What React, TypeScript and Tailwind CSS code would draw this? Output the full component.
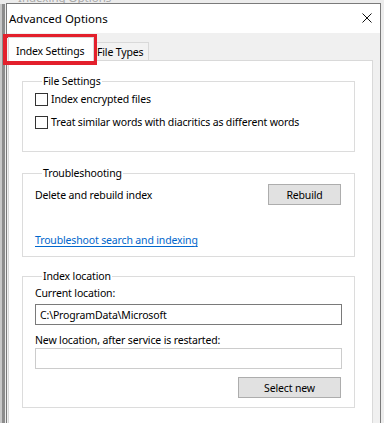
import React from "react";

const font = "font-['Segoe_UI','Noto_Sans',sans-serif]";

function CheckRow({ label }: { label: string }) {
  return (
    <div className="flex items-center h-[16px]">
      <span className="w-[13px] h-[13px] border border-[#333333] bg-white shrink-0" />
      <span className="ml-[3px] leading-[16px] whitespace-nowrap">{label}</span>
    </div>
  );
}

function Btn({ label, w }: { label: string; w: string }) {
  return (
    <div
      className={`${w} h-[21px] border border-[#adadad] bg-[#e1e1e1] flex items-center justify-center leading-[16px]`}
    >
      {label}
    </div>
  );
}

export default function App() {
  return (
    <div
      className={`relative w-[384px] h-[423px] overflow-hidden bg-[#ececec] text-[10.5px] tracking-[-0.15px] text-black ${font}`}
    >
      {/* parent window remnants behind */}
      <div className="absolute left-[18px] top-[-10px] text-[11.5px] tracking-normal text-[#a8a8a8] leading-[16px] whitespace-nowrap">
        Indexing Options
      </div>
      <div className="absolute left-0 top-[4px] w-[2px] h-[420px] bg-[#c8c8c8]" />
      <div className="absolute left-[2px] top-[4px] w-[3px] h-[420px] bg-[#8c8c8c]" />

      {/* dialog window */}
      <div className="absolute left-[6px] top-[3px] w-[375px] h-[440px] border border-[#7a7a7a] bg-[#f0f0f0] flex flex-col">
        <div className="h-[29px] bg-white flex items-center justify-between pl-[2px] pr-[8px] shrink-0">
          <span className="leading-[16px] text-[11.5px] tracking-normal">Advanced Options</span>
          <svg width="10" height="10" viewBox="0 0 10 10" className="mb-[1px]">
            <path d="M0.5 0.5 L9.5 9.5 M9.5 0.5 L0.5 9.5" stroke="#111" strokeWidth="1" />
          </svg>
        </div>

        {/* tabs */}
        <div className="flex items-end h-[28px] pl-[1px] shrink-0">
          <div className="w-[86px] h-[24px] bg-white border border-[#d9d9d9] border-b-0 flex items-center pl-[7px] pt-[3px] leading-[16px] whitespace-nowrap relative z-10">
            Index Settings
          </div>
          <div className="w-[55px] h-[19px] bg-[#f2f2f2] border border-[#d9d9d9] border-b-0 border-l-0 flex items-center pl-[3px] leading-[16px] whitespace-nowrap">
            File Types
          </div>
        </div>

        {/* panel */}
        <div className="ml-[1px] w-[365px] flex-1 -mt-[1px] bg-white border border-[#d9d9d9] pl-[13px] pt-[12px]">
          <fieldset className="w-[333px] border border-[#dcdcdc] pl-[12px] pb-[21px] pt-0 m-0">
            <legend className="ml-[7px] px-[1px] leading-[16px]">File Settings</legend>
            <div className="mt-[2px] flex flex-col gap-[7px]">
              <CheckRow label="Index encrypted files" />
              <CheckRow label="Treat similar words with diacritics as different words" />
            </div>
          </fieldset>

          <fieldset className="mt-[13px] w-[333px] border border-[#dcdcdc] pl-[12px] pr-[13px] pb-[8px] m-0">
            <legend className="ml-[7px] px-[1px] leading-[16px]">Troubleshooting</legend>
            <div className="mt-[3px] flex items-center justify-between">
              <span className="leading-[16px]">Delete and rebuild index</span>
              <Btn label="Rebuild" w="w-[73px]" />
            </div>
            <div className="mt-[27px] h-[16px] leading-[16px] text-[#0066cc] underline underline-offset-2">
              Troubleshoot search and indexing
            </div>
          </fieldset>

          <fieldset className="mt-[11px] w-[333px] border border-[#dcdcdc] pl-[12px] pr-[12px] pb-[9px] m-0">
            <legend className="ml-[7px] px-[1px] leading-[16px]">Index location</legend>
            <div className="mt-[1px] h-[16px] leading-[16px]">Current location:</div>
            <div className="mt-[3px] h-[21px] border border-[#7a7a7a] bg-white flex items-center pl-[4px] leading-[16px]">
              C:\ProgramData\Microsoft
            </div>
            <div className="mt-[7px] h-[16px] leading-[16px]">New location, after service is restarted:</div>
            <div className="h-[21px] border border-[#cccccc] bg-white" />
            <div className="mt-[8px] flex justify-end pr-[1px]">
              <Btn label="Select new" w="w-[103px]" />
            </div>
          </fieldset>
        </div>
      </div>

      {/* red annotation box */}
      <div className="absolute left-[3px] top-[34px] w-[94px] h-[31px] border-[4px] border-[#e3202c]" />
    </div>
  );
}
